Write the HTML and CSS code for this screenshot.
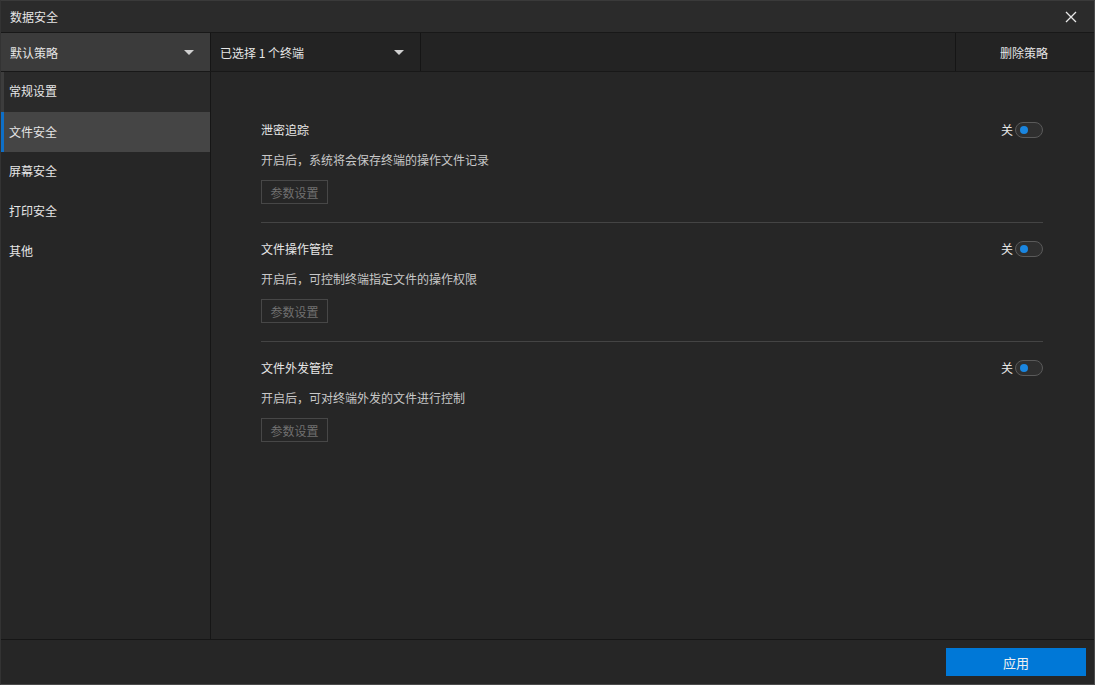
FILE: index.html
```html
<!DOCTYPE html>
<html lang="zh">
<head>
<meta charset="utf-8">
<title>数据安全</title>
<link rel="stylesheet" href="styles.css">
</head>
<body>
<div class="window">
  <div class="titlebar">
    <span class="title">数据安全</span>
    <svg class="close" width="12" height="12" viewBox="0 0 12 12"><path d="M1 1L11 11M11 1L1 11" stroke="#e8e8e8" stroke-width="1.3" fill="none"/></svg>
  </div>
  <div class="toolbar">
    <div class="dropdown policy"><span>默认策略</span><span class="arrow"></span></div>
    <div class="dropdown terminal"><span>已选择 1 个终端</span><span class="arrow"></span></div>
    <div class="spacer"></div>
    <div class="delete">删除策略</div>
  </div>
  <div class="main">
    <div class="sidebar">
      <div class="nav-item hover">常规设置</div>
      <div class="nav-item active">文件安全</div>
      <div class="nav-item">屏幕安全</div>
      <div class="nav-item">打印安全</div>
      <div class="nav-item">其他</div>
    </div>
    <div class="content">
      <div class="section">
        <div class="sec-head"><span class="sec-title">泄密追踪</span><span class="switch-wrap"><span class="switch-label">关</span><span class="switch"><span class="dot"></span></span></span></div>
        <div class="sec-desc">开启后，系统将会保存终端的操作文件记录</div>
        <div class="param-btn">参数设置</div>
      </div>
      <div class="section">
        <div class="sec-head"><span class="sec-title">文件操作管控</span><span class="switch-wrap"><span class="switch-label">关</span><span class="switch"><span class="dot"></span></span></span></div>
        <div class="sec-desc">开启后，可控制终端指定文件的操作权限</div>
        <div class="param-btn">参数设置</div>
      </div>
      <div class="section last">
        <div class="sec-head"><span class="sec-title">文件外发管控</span><span class="switch-wrap"><span class="switch-label">关</span><span class="switch"><span class="dot"></span></span></span></div>
        <div class="sec-desc">开启后，可对终端外发的文件进行控制</div>
        <div class="param-btn">参数设置</div>
      </div>
    </div>
  </div>
  <div class="footer">
    <div class="apply">应用</div>
  </div>
</div>
</body>
</html>
```
FILE: styles.css
```css
* { box-sizing: border-box; }
html, body { margin: 0; padding: 0; background: #262626; }
body {
  font-family: "Noto Sans CJK SC", "Microsoft YaHei", "Liberation Sans", sans-serif;
  font-size: 12px;
  color: #e6e6e6;
}
.window {
  width: 1095px;
  height: 685px;
  display: flex;
  flex-direction: column;
  background: #262626;
  border-right: 1px solid #4a4a4a;
  border-bottom: 1px solid #4a4a4a;
  border-top: 1px solid #3a3a3a;
  border-left: 1px solid #333;
}
.titlebar {
  height: 31px;
  display: flex;
  align-items: center;
  justify-content: space-between;
  padding: 0 17px 0 9px;
  background: #2b2b2b;
  flex: none;
}
.title { line-height: 16px; }
.close { display: block; }
.toolbar {
  height: 40px;
  flex: none;
  display: flex;
  background: #232323;
  border-top: 1px solid #181818;
  border-bottom: 1px solid #181818;
}
.dropdown {
  display: flex;
  align-items: center;
  justify-content: space-between;
  width: 210px;
  padding: 0 16px 0 9px;
  border-right: 1px solid #151515;
}
.policy { background: #3b3b3b; }
.terminal { width: 210px; padding-left: 9px; }
.arrow {
  width: 0; height: 0;
  border-left: 5px solid transparent;
  border-right: 5px solid transparent;
  border-top: 5px solid #d0d0d0;
}
.spacer { flex: 1; }
.delete {
  width: 139px;
  border-left: 1px solid #151515;
  display: flex;
  align-items: center;
  justify-content: center;
  padding-right: 2px;
}
.main { flex: 1; display: flex; min-height: 0; }
.sidebar {
  width: 210px;
  flex: none;
  background: #262626;
  border-right: 1px solid #161616;
}
.nav-item {
  height: 40px;
  display: flex;
  align-items: center;
  padding-left: 5px;
  padding-bottom: 3px;
  border-left: 3px solid transparent;
}
.nav-item.hover { border-left-color: #3d3d3d; background: #2a2a2a; }
.nav-item.active { background: #454545; border-left-color: #0e6fc7; padding-bottom: 1px; }
.content {
  flex: 1;
  padding: 50px 51px 0 50px;
}
.section {
  padding-bottom: 18px;
  border-bottom: 1px solid #444;
  margin-bottom: 18px;
}
.section.last { border-bottom: none; }
.sec-head {
  height: 16px;
  display: flex;
  align-items: center;
  justify-content: space-between;
}
.sec-title { line-height: 16px; }
.switch-wrap { display: flex; align-items: center; }
.switch-label { margin-right: 2px; line-height: 16px; }
.switch {
  width: 28px;
  height: 16px;
  border: 1px solid #5a5a5a;
  border-radius: 8px;
  background: #2f2f2f;
  display: flex;
  align-items: center;
  padding-left: 4px;
}
.dot {
  width: 8px; height: 8px;
  border-radius: 50%;
  background: #1a86e0;
}
.sec-desc {
  margin-top: 14px;
  line-height: 16px;
  color: #c8c8c8;
}
.param-btn {
  margin-top: 12px;
  width: 67px;
  height: 24px;
  border: 1px solid #474747;
  color: #707070;
  display: flex;
  align-items: center;
  justify-content: center;
}
.footer {
  height: 45px;
  flex: none;
  border-top: 1px solid #161616;
  display: flex;
  align-items: center;
  justify-content: flex-end;
  padding-right: 8px;
}
.apply {
  width: 140px;
  height: 28px;
  background: #0078d7;
  color: #f0f0f0;
  display: flex;
  align-items: center;
  justify-content: center;
  font-size: 13px;
}
```
